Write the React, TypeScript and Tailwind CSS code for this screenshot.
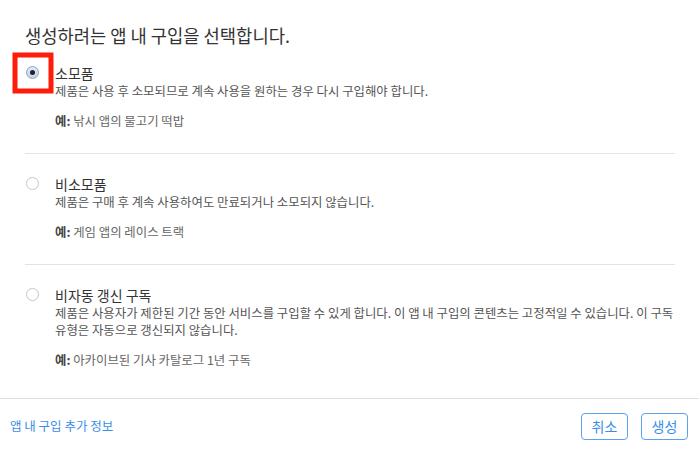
import React from 'react';

interface PurchaseType {
  id: string;
  title: string;
  lines: string[];
  example: string;
}

const types: PurchaseType[] = [
  {
    id: 'consumable',
    title: '소모품',
    lines: ['제품은 사용 후 소모되므로 계속 사용을 원하는 경우 다시 구입해야 합니다.'],
    example: '낚시 앱의 물고기 떡밥',
  },
  {
    id: 'non-consumable',
    title: '비소모품',
    lines: ['제품은 구매 후 계속 사용하여도 만료되거나 소모되지 않습니다.'],
    example: '게임 앱의 레이스 트랙',
  },
  {
    id: 'non-renewing',
    title: '비자동 갱신 구독',
    lines: [
      '제품은 사용자가 제한된 기간 동안 서비스를 구입할 수 있게 합니다. 이 앱 내 구입의 콘텐츠는 고정적일 수 있습니다. 이 구독',
      '유형은 자동으로 갱신되지 않습니다.',
    ],
    example: '아카이브된 기사 카탈로그 1년 구독',
  },
];

const Radio: React.FC<{ checked: boolean }> = ({ checked }) =>
  checked ? (
    <span className="relative flex h-[13px] w-[13px] items-center justify-center rounded-full border border-[#8aa4c8] bg-gradient-to-b from-[#dfe9f7] to-[#c3d4ec]">
      <span className="h-[5px] w-[5px] rounded-full bg-[#222]" />
      <span className="absolute left-1/2 top-1/2 h-[41px] w-[41px] -translate-x-1/2 -translate-y-1/2 border-[5px] border-[#ff1d0a]" />
    </span>
  ) : (
    <span className="block h-[13px] w-[13px] rounded-full border border-[#c6c6c6] bg-white" />
  );

export default function App() {
  return (
    <div
      className="flex h-[453px] w-[699px] flex-col bg-white text-[#333]"
      style={{ fontFamily: '"Noto Sans CJK KR", "Noto Sans", sans-serif' }}
    >
      <h1 className="ml-[25px] mt-[22px] text-[17.7px] leading-[26px] text-[#333]">
        생성하려는 앱 내 구입을 선택합니다.
      </h1>

      <div className="ml-[25px] mr-[24px] mt-[15px] flex-1">
        {types.map((t, i) => (
          <div
            key={t.id}
            className={`flex ${i === 0 ? 'pt-0' : 'pt-[20px]'} ${i < types.length - 1 ? 'border-b border-[#e3e3e3] pb-[23px]' : ''}`}
          >
            <div className="w-[30px] pl-px pt-[3px]">
              <Radio checked={i === 0} />
            </div>
            <div>
              <div className="text-[14px] leading-[20px] text-[#333]">{t.title}</div>
              <div className="text-[12.4px] leading-[17px] text-[#555]">
                {t.lines.map((l) => (
                  <div key={l}>{l}</div>
                ))}
              </div>
              <div className="mt-[13px] text-[12.4px] leading-[17px] text-[#666]">
                <span className="font-bold text-[#444]">예:</span> {t.example}
              </div>
            </div>
          </div>
        ))}
      </div>

      <div className="flex h-[55px] items-center justify-between border-t border-[#e0e0e0] pl-[10px] pr-[11px]">
        <a className="text-[12.5px] text-[#3b8ee8]">앱 내 구입 추가 정보</a>
        <div className="flex gap-[13px]">
          <button className="h-[27px] w-[47px] rounded-[4px] border border-[#5aa2ee] text-[14px] text-[#3b8ee8]">
            취소
          </button>
          <button className="h-[27px] w-[47px] rounded-[4px] border border-[#5aa2ee] text-[14px] text-[#3b8ee8]">
            생성
          </button>
        </div>
      </div>
    </div>
  );
}
